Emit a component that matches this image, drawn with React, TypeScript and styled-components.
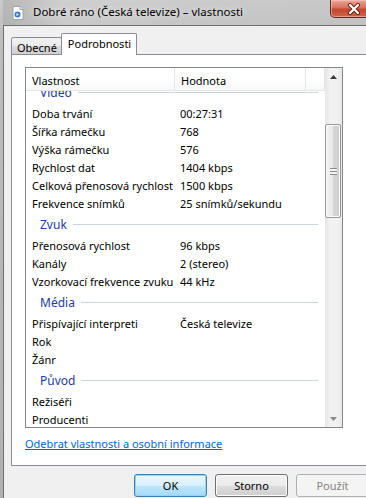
import React from "react";
import styled, { createGlobalStyle } from "styled-components";

const GlobalStyle = createGlobalStyle`
  html, body {
    margin: 0;
    padding: 0;
    width: 366px;
    height: 498px;
    overflow: hidden;
    background: #b4b4b4;
  }
  body {
    font-family: "Noto Sans", "Liberation Sans", sans-serif;
    font-size: 11px;
    color: #000;
  }
`;

const Window = styled.div`
  width: 384px;
  height: 520px;
  display: flex;
  flex-direction: column;
  padding-left: 3px;
  background: linear-gradient(
    to bottom,
    #c9c9c9 0%,
    #bdbdbd 40px,
    #b0b0b0 100%
  );
`;

const TitleBar = styled.div`
  height: 25px;
  display: flex;
  align-items: center;
  position: relative;
  padding-left: 7px;
  gap: 7px;
  background: linear-gradient(
    to right,
    rgba(150, 150, 150, 0.35) 0px,
    rgba(255, 255, 255, 0.12) 60px,
    rgba(210, 210, 210, 0.2) 200px,
    rgba(190, 190, 190, 0.1) 100%
  );
`;

const TitleText = styled.span`
  font-size: 11.5px;
  color: #000;
  text-shadow: 0 0 6px rgba(255, 255, 255, 0.9);
  margin-top: -2px;
`;

const CloseButton = styled.div`
  position: absolute;
  top: 0;
  left: 327px;
  width: 45px;
  height: 17px;
  border: 1px solid #5e2a22;
  border-top: none;
  border-radius: 0 0 5px 5px;
  background: linear-gradient(
    to bottom,
    #e9a99b 0%,
    #d8715e 45%,
    #c2452e 55%,
    #d0654b 100%
  );
  box-shadow: inset 0 0 0 1px rgba(255, 210, 200, 0.5);
  display: flex;
  align-items: center;
  justify-content: center;
`;

const Client = styled.div`
  flex: 1;
  display: flex;
  flex-direction: column;
  background: #f0f0f0;
  border-left: 1px solid #6f6f6f;
  border-top: 1px solid #6f6f6f;
  padding: 7px 0 0 7px;
`;

const TabStrip = styled.div`
  display: flex;
  align-items: flex-end;
  height: 22px;
  margin-bottom: -1px;
  position: relative;
  z-index: 1;
`;

const Tab = styled.div<{ $active?: boolean }>`
  box-sizing: border-box;
  display: flex;
  align-items: center;
  border: 1px solid #898c95;
  border-bottom: ${(p) => (p.$active ? "none" : "1px solid #898c95")};
  border-radius: 2px 2px 0 0;
  font-size: 11px;
  ${(p) =>
    p.$active
      ? `
    height: 22px;
    padding: 0 5px 3px 6px;
    margin-left: -1px;
    background: #fff;
  `
      : `
    height: 18px;
    padding: 2px 4px 0 5px;
    background: linear-gradient(to bottom, #f2f2f2 0%, #ebebeb 50%, #dddddd 50%, #cfcfcf 100%);
  `}
`;

const Panel = styled.div`
  box-sizing: border-box;
  width: 370px;
  height: 412px;
  background: #fff;
  border: 1px solid #898c95;
  padding: 12px 13px;
  display: flex;
  flex-direction: column;
`;

const ListBox = styled.div`
  box-sizing: border-box;
  width: 318px;
  height: 361px;
  border: 1px solid #828790;
  display: flex;
`;

const ListMain = styled.div`
  flex: 1;
  display: flex;
  flex-direction: column;
  overflow: hidden;
`;

const Header = styled.div`
  box-sizing: border-box;
  height: 23px;
  display: grid;
  grid-template-columns: 149px 131px 1fr;
  background: linear-gradient(to bottom, #ffffff 0%, #ffffff 50%, #f7f8fa 100%);
  border-bottom: 1px solid #e5e5e5;
  position: relative;
  z-index: 1;
`;

const HeaderCell = styled.div`
  display: flex;
  align-items: center;
  padding: 2px 0 0 6px;
  border-right: 1px solid #e3e5e8;
`;

const Body = styled.div`
  flex: 1;
  overflow: hidden;
`;

const BodyInner = styled.div`
  margin-top: -11px;
`;

const Row = styled.div`
  height: 18px;
  display: grid;
  grid-template-columns: 149px 1fr;
  align-items: center;
`;

const Name = styled.div`
  padding-left: 6px;
  white-space: nowrap;
`;

const Value = styled.div`
  padding-left: 5px;
  white-space: nowrap;
`;

const Group = styled.div`
  height: 24px;
  display: flex;
  align-items: center;
  padding: 0 7px 0 14px;
`;

const GroupLabel = styled.span`
  font-size: 12px;
  color: #1e3c9b;
`;

const GroupLine = styled.div`
  flex: 1;
  height: 1px;
  margin-left: 6px;
  background: #ccd4e2;
`;

const ScrollBar = styled.div`
  width: 17px;
  display: flex;
  flex-direction: column;
  background: linear-gradient(to right, #e6e6e6 0%, #f2f2f2 30%, #f2f2f2 70%, #e8e8e8 100%);
`;

const ArrowButton = styled.div`
  height: 17px;
  display: flex;
  align-items: center;
  justify-content: center;
`;

const Track = styled.div`
  flex: 1;
  padding-top: 39px;
`;

const Thumb = styled.div`
  box-sizing: border-box;
  height: 94px;
  margin: 0 1px 0 0;
  border: 1px solid #979797;
  border-radius: 2px;
  background: linear-gradient(to right, #f4f4f4 0%, #e8e8e8 50%, #d6d6d6 51%, #cfcfcf 100%);
  box-shadow: inset 0 0 0 1px #fbfbfb;
  display: flex;
  align-items: center;
  justify-content: center;
`;

const Grip = styled.div`
  width: 7px;
  height: 7px;
  background: repeating-linear-gradient(
    to bottom,
    #8a8a8a 0px,
    #8a8a8a 1px,
    #f4f4f4 1px,
    #f4f4f4 3px
  );
`;

const Link = styled.a`
  margin-top: 8px;
  font-size: 11px;
  color: #0066cc;
  text-decoration: underline;
  line-height: 16px;
  cursor: pointer;
`;

const ButtonRow = styled.div`
  display: flex;
  gap: 8px;
  margin: 8px 0 0 123px;
`;

const Button = styled.button<{ $variant?: "default" | "disabled" }>`
  box-sizing: border-box;
  width: 73px;
  height: 23px;
  padding: 0;
  font-family: inherit;
  font-size: 11px;
  border-radius: 3px;
  border: 1px solid #707070;
  color: #000;
  background: linear-gradient(to bottom, #f2f2f2 0%, #ebebeb 50%, #dddddd 51%, #cfcfcf 100%);
  box-shadow: inset 0 0 0 1px #fcfcfc;
  ${(p) =>
    p.$variant === "default" &&
    `
    border-color: #3c7fb1;
    background: linear-gradient(to bottom, #eaf6fd 0%, #d9f0fc 50%, #bee6fd 51%, #a7d9f5 100%);
    box-shadow: inset 0 0 0 1px #8fd9f8;
  `}
  ${(p) =>
    p.$variant === "disabled" &&
    `
    border-color: #adb2b5;
    color: #838383;
    background: #f4f4f4;
    box-shadow: none;
  `}
`;

type Item = { kind: "group"; label: string } | { kind: "row"; name: string; value?: string };

const items: Item[] = [
  { kind: "group", label: "Video" },
  { kind: "row", name: "Doba trvání", value: "00:27:31" },
  { kind: "row", name: "Šířka rámečku", value: "768" },
  { kind: "row", name: "Výška rámečku", value: "576" },
  { kind: "row", name: "Rychlost dat", value: "1404 kbps" },
  { kind: "row", name: "Celková přenosová rychlost", value: "1500 kbps" },
  { kind: "row", name: "Frekvence snímků", value: "25 snímků/sekundu" },
  { kind: "group", label: "Zvuk" },
  { kind: "row", name: "Přenosová rychlost", value: "96 kbps" },
  { kind: "row", name: "Kanály", value: "2 (stereo)" },
  { kind: "row", name: "Vzorkovací frekvence zvuku", value: "44 kHz" },
  { kind: "group", label: "Média" },
  { kind: "row", name: "Přispívající interpreti", value: "Česká televize" },
  { kind: "row", name: "Rok" },
  { kind: "row", name: "Žánr" },
  { kind: "group", label: "Původ" },
  { kind: "row", name: "Režiséři" },
  { kind: "row", name: "Producenti" },
];

const FileIcon = () => (
  <svg width="16" height="16" viewBox="0 0 16 16">
    <path d="M3 1.5h7l3 3v10H3z" fill="#fdfdfd" stroke="#9aa3ad" />
    <path d="M10 1.5v3h3" fill="#e6e9ee" stroke="#9aa3ad" />
    <circle cx="7.5" cy="9.5" r="3" fill="#3a78c8" />
    <path d="M6.5 8v3l2.5-1.5z" fill="#fff" />
  </svg>
);

const CloseIcon = () => (
  <svg width="14" height="12" viewBox="0 0 14 12">
    <path d="M3 2l8 8M11 2l-8 8" stroke="#5b2218" strokeWidth="4" strokeLinecap="round" />
    <path d="M3 2l8 8M11 2l-8 8" stroke="#ffffff" strokeWidth="2.2" strokeLinecap="round" />
  </svg>
);

const Arrow = ({ up }: { up?: boolean }) => (
  <svg width="7" height="4" viewBox="0 0 7 4">
    <path d={up ? "M0 4L3.5 0L7 4z" : "M0 0L3.5 4L7 0z"} fill={up ? "#3a3a3a" : "#8a8a8a"} />
  </svg>
);

const App = () => {
  return (
    <>
      <GlobalStyle />
      <Window>
        <TitleBar>
          <FileIcon />
          <TitleText>Dobré ráno (Česká televize) – vlastnosti</TitleText>
          <CloseButton>
            <CloseIcon />
          </CloseButton>
        </TitleBar>
        <Client>
          <TabStrip>
            <Tab>Obecné</Tab>
            <Tab $active>Podrobnosti</Tab>
          </TabStrip>
          <Panel>
            <ListBox>
              <ListMain>
                <Header>
                  <HeaderCell>Vlastnost</HeaderCell>
                  <HeaderCell>Hodnota</HeaderCell>
                  <HeaderCell />
                </Header>
                <Body>
                  <BodyInner>
                    {items.map((it, i) =>
                      it.kind === "group" ? (
                        <Group key={i}>
                          <GroupLabel>{it.label}</GroupLabel>
                          <GroupLine />
                        </Group>
                      ) : (
                        <Row key={i}>
                          <Name>{it.name}</Name>
                          <Value>{it.value}</Value>
                        </Row>
                      )
                    )}
                  </BodyInner>
                </Body>
              </ListMain>
              <ScrollBar>
                <ArrowButton>
                  <Arrow up />
                </ArrowButton>
                <Track>
                  <Thumb>
                    <Grip />
                  </Thumb>
                </Track>
                <ArrowButton>
                  <Arrow />
                </ArrowButton>
              </ScrollBar>
            </ListBox>
            <Link>Odebrat vlastnosti a osobní informace</Link>
          </Panel>
          <ButtonRow>
            <Button $variant="default">OK</Button>
            <Button>Storno</Button>
            <Button $variant="disabled">Použít</Button>
          </ButtonRow>
        </Client>
      </Window>
    </>
  );
};

export default App;
